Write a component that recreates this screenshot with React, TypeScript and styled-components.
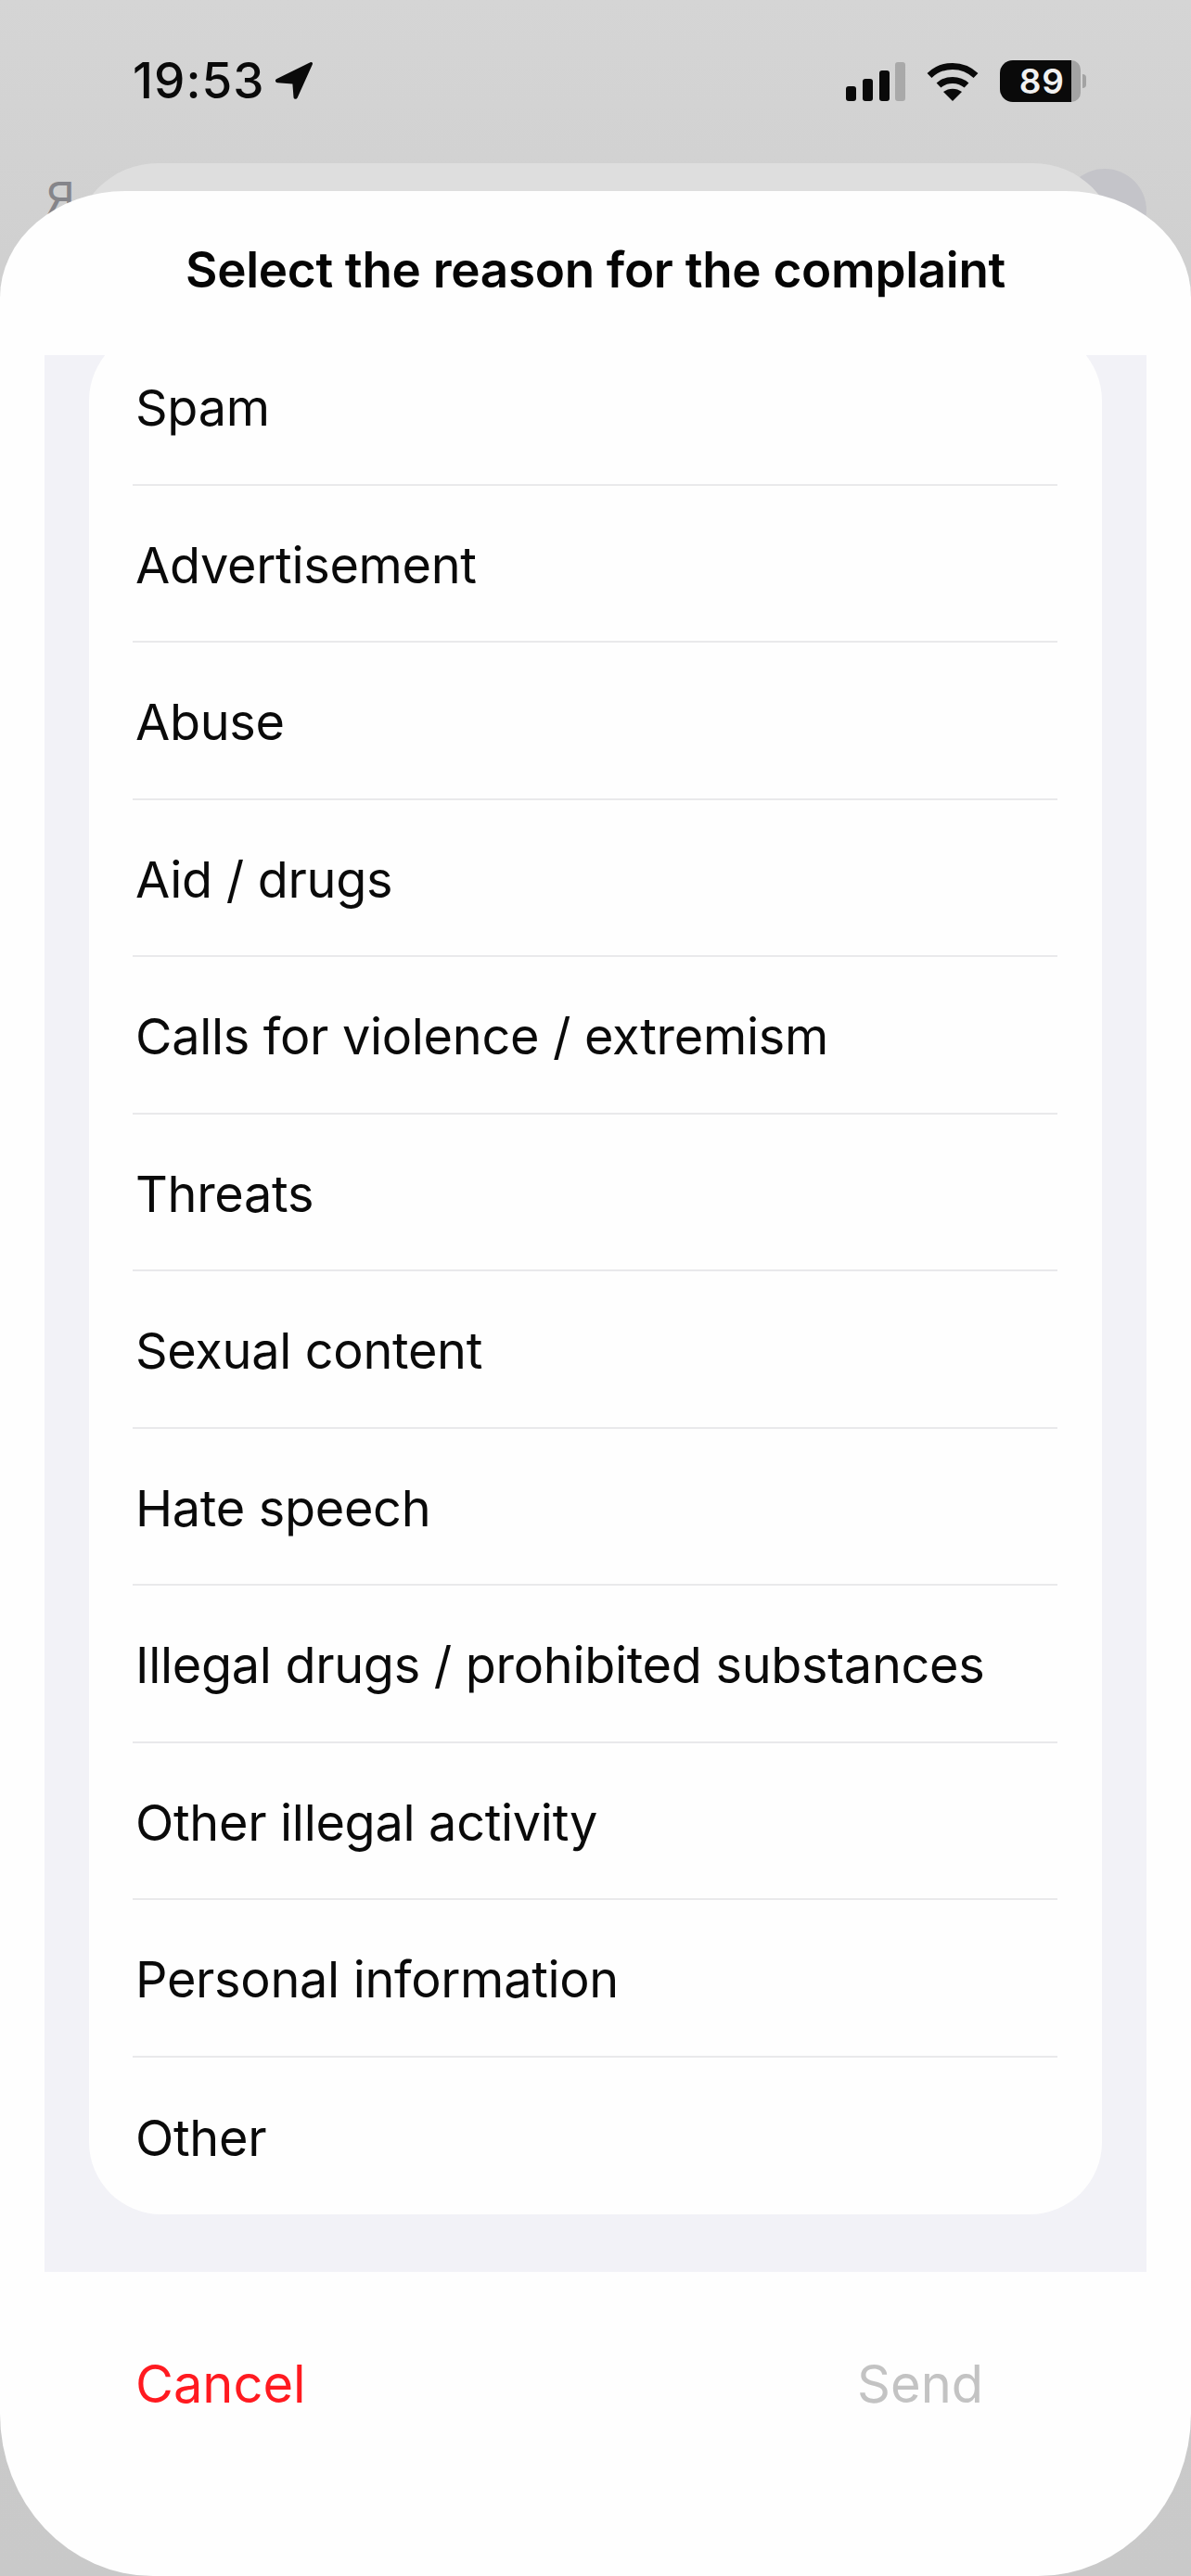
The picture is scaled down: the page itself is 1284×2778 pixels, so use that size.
import React from 'react';
import styled, { createGlobalStyle } from 'styled-components';

const Global = createGlobalStyle`
  html, body { margin: 0; padding: 0; }
  body { width: 1284px; height: 2778px; overflow: hidden; background: #d0d0d0; }
  * { box-sizing: border-box; }
`;

const Screen = styled.div`
  position: relative;
  width: 1284px;
  height: 2778px;
  display: flex;
  flex-direction: column;
  overflow: hidden;
  font-family: Inter, "Liberation Sans", sans-serif;
  color: #0a0a0a;
  background: linear-gradient(180deg, #d5d5d5 0%, #d0d0d0 10%, #c9c9c9 100%);
`;

const StatusBar = styled.div`
  height: 176px;
  flex: none;
  padding: 65px 113px 0 143px;
  display: flex;
  justify-content: space-between;
  align-items: flex-start;
`;

const TimeGroup = styled.div`
  display: flex;
  align-items: center;
  gap: 11px;
`;

const Time = styled.span`
  font-size: 53px;
  line-height: 44px;
  font-weight: 500;
  letter-spacing: 1px;
`;

const StatusIcons = styled.div`
  display: flex;
  align-items: center;
  gap: 23px;
`;

const Battery = styled.div`
  display: flex;
  align-items: center;
`;

const BatteryFill = styled.div`
  width: 77px;
  height: 45px;
  background: #0a0a0a;
  border-radius: 14px 0 0 14px;
  color: #f1f1f1;
  font-size: 37px;
  line-height: 45px;
  font-weight: 600;
  letter-spacing: 1px;
  text-align: right;
  padding-right: 7px;
`;

const BatteryRest = styled.div`
  width: 10px;
  height: 45px;
  background: #a3a3a3;
  border-radius: 0 12px 12px 0;
`;

const BatteryNub = styled.div`
  width: 4px;
  height: 15px;
  margin-left: 2px;
  background: #a3a3a3;
  border-radius: 0 4px 4px 0;
`;

const BackLetter = styled.span`
  position: absolute;
  left: 50px;
  top: 185px;
  font-size: 48px;
  line-height: 58px;
  color: #85858a;
`;

const BackCircle = styled.div`
  position: absolute;
  left: 1146px;
  top: 182px;
  width: 90px;
  height: 90px;
  border-radius: 50%;
  background: #c4c4c9;
`;

const BackSheet = styled.div`
  position: relative;
  flex: none;
  height: 130px;
  margin: 0 80px -100px;
  background: #dedede;
  border-radius: 90px 90px 0 0;
`;

const Sheet = styled.div`
  position: relative;
  flex: 1;
  display: flex;
  flex-direction: column;
  background: #fefefe;
  border-radius: 135px 135px 165px 165px / 115px 115px 175px 175px;
`;

const Title = styled.h1`
  flex: none;
  height: 177px;
  margin: 0;
  padding-bottom: 8px;
  display: flex;
  align-items: center;
  justify-content: center;
  font-size: 53px;
  font-weight: 600;
  letter-spacing: -0.3px;
  color: #050505;
`;

const Panel = styled.div`
  flex: none;
  height: 2067px;
  margin: 0 48px;
  padding: 0 48px;
  overflow: hidden;
  background: #f2f2f7;
`;

const Card = styled.ul`
  margin: -29px 0 0;
  padding: 0 48px 0 47px;
  list-style: none;
  background: #fefefe;
  border-radius: 78px;
`;

const Row = styled.li<{ $last?: boolean }>`
  height: 169.5px;
  display: flex;
  align-items: center;
  padding: 4px 0 0 3px;
  font-size: 54px;
  font-weight: 400;
  letter-spacing: -0.3px;
  border-bottom: ${(p) => (p.$last ? 'none' : '2px solid #e9e9eb')};
`;

const Footer = styled.div`
  flex: none;
  display: flex;
  justify-content: space-between;
  padding: 90px 224px 0 146px;
`;

const FooterButton = styled.button<{ $tone: 'danger' | 'muted' }>`
  padding: 0;
  border: none;
  background: none;
  font-family: inherit;
  font-size: 56px;
  line-height: 62px;
  font-weight: 400;
  color: ${(p) => (p.$tone === 'danger' ? '#ff1a20' : '#c3c3c3')};
`;

const reasons = [
  'Spam',
  'Advertisement',
  'Abuse',
  'Aid / drugs',
  'Calls for violence / extremism',
  'Threats',
  'Sexual content',
  'Hate speech',
  'Illegal drugs / prohibited substances',
  'Other illegal activity',
  'Personal information',
  'Other',
];

const LocationArrow = () => (
  <svg width="42" height="42" viewBox="0 0 42 42" aria-hidden="true">
    <path
      d="M38.5 1.2 C40.2 .4 41.6 1.8 40.8 3.6 L24.6 39.5 C23.6 41.6 20.6 41.2 20.5 38.8 L19.4 24.6 L3.2 23.2 C.6 23 .2 20 2.4 19 Z"
      fill="#0a0a0a"
    />
  </svg>
);

const Signal = () => (
  <svg width="64" height="42" viewBox="0 0 64 42" aria-hidden="true">
    <rect x="0" y="26" width="11" height="16" rx="3" fill="#0a0a0a" />
    <rect x="18" y="18" width="11" height="24" rx="3" fill="#0a0a0a" />
    <rect x="36" y="9" width="11" height="33" rx="3" fill="#0a0a0a" />
    <rect x="53" y="0" width="11" height="42" rx="3" fill="#a9a9a9" />
  </svg>
);

const Wifi = () => (
  <svg width="56" height="42" viewBox="0 0 56 42" aria-hidden="true">
    <path d="M3 14.5 C17 1 39 1 53 14.5" fill="none" stroke="#0a0a0a" strokeWidth="7" />
    <path d="M13 25 C21 17.5 35 17.5 43 25" fill="none" stroke="#0a0a0a" strokeWidth="7" />
    <path d="M28 42 L18 32 C24 27.5 32 27.5 38 32 Z" fill="#0a0a0a" />
  </svg>
);

export default function App() {
  return (
    <Screen>
      <Global />
      <StatusBar>
        <TimeGroup>
          <Time>19:53</Time>
          <LocationArrow />
        </TimeGroup>
        <StatusIcons>
          <Signal />
          <Wifi />
          <Battery>
            <BatteryFill>89</BatteryFill>
            <BatteryRest />
            <BatteryNub />
          </Battery>
        </StatusIcons>
      </StatusBar>
      <BackLetter>Я</BackLetter>
      <BackCircle />
      <BackSheet />
      <Sheet>
        <Title>Select the reason for the complaint</Title>
        <Panel>
          <Card>
            {reasons.map((reason, i) => (
              <Row key={reason} $last={i === reasons.length - 1}>
                {reason}
              </Row>
            ))}
          </Card>
        </Panel>
        <Footer>
          <FooterButton $tone="danger">Cancel</FooterButton>
          <FooterButton $tone="muted">Send</FooterButton>
        </Footer>
      </Sheet>
    </Screen>
  );
}
